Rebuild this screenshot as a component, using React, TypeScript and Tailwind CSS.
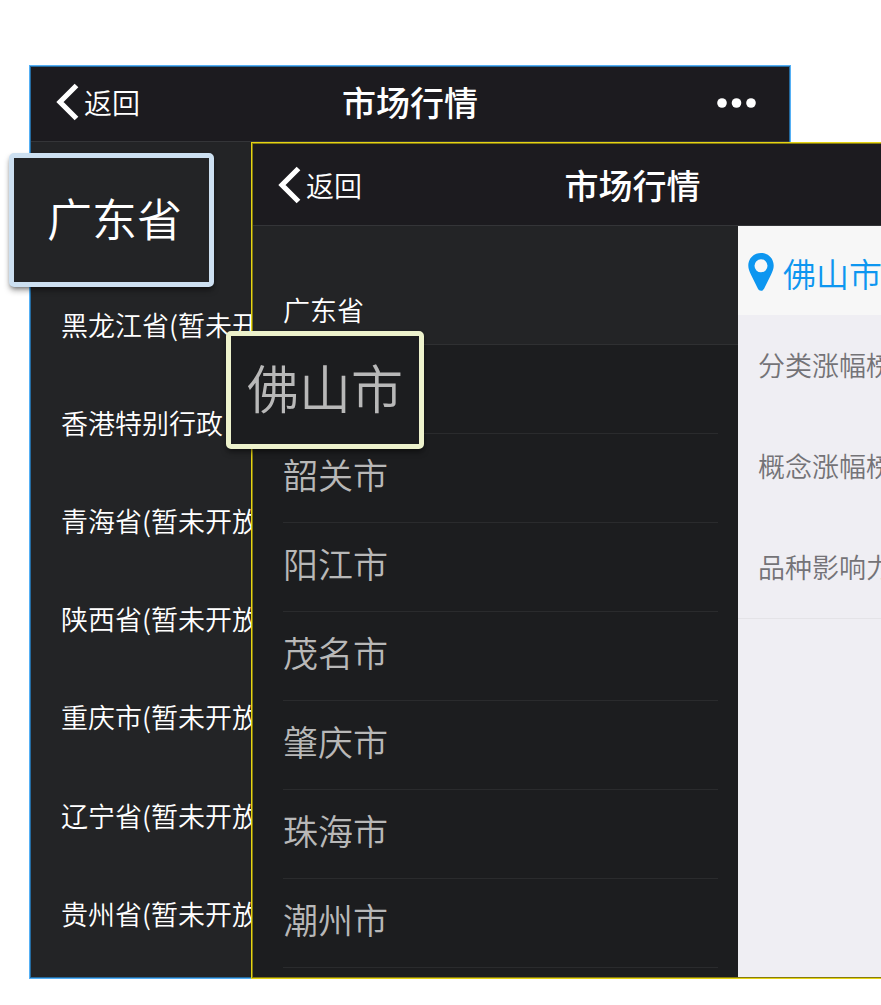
import React from "react";

const provinces = [
  "黑龙江省(暂未开放)",
  "香港特别行政",
  "青海省(暂未开放)",
  "陕西省(暂未开放)",
  "重庆市(暂未开放)",
  "辽宁省(暂未开放)",
  "贵州省(暂未开放)",
];

const cities = ["韶关市", "阳江市", "茂名市", "肇庆市", "珠海市", "潮州市"];

const rankings = ["分类涨幅榜", "概念涨幅榜", "品种影响力"];

function NavBar({ className = "" }: { className?: string }) {
  return (
    <header
      className={`grid grid-cols-3 items-center border-b border-[#343538] bg-[#1c1b1f] px-6 text-white ${className}`}
    >
      <button type="button" className="flex items-center gap-[3px] text-[28px] leading-[40px]">
        <svg viewBox="0 0 26 40" className="h-10 w-[26px]" fill="none" aria-hidden="true">
          <path d="M21.5 3.5 5 20 21.5 36.5" stroke="currentColor" strokeWidth="5.2" />
        </svg>
        返回
      </button>
      <h1 className="text-center text-[34px] leading-[40px] font-medium">市场行情</h1>
      <button type="button" aria-label="更多" className="mt-[2px] mr-[7px] justify-self-end">
        <svg viewBox="0 0 42 12" className="h-3 w-[42px]" fill="currentColor" aria-hidden="true">
          <circle cx="6" cy="6" r="4.8" />
          <circle cx="20.5" cy="6" r="4.8" />
          <circle cx="35" cy="6" r="4.8" />
        </svg>
      </button>
    </header>
  );
}

function ProvinceScreen() {
  return (
    <section className="ml-[30px] w-[760px] border border-[#256a9e] bg-[#232426] outline outline-[#55b0f5]">
      <NavBar className="h-[75px] pb-1" />
      <ul className="grid h-[835px] auto-rows-fr pt-[134px] pb-[14px] text-[27px] text-white">
        {provinces.map((name) => (
          <li key={name} className="flex items-center pl-[30px] whitespace-nowrap">
            {name}
          </li>
        ))}
      </ul>
    </section>
  );
}

function CityScreen() {
  return (
    <section className="absolute top-[143px] left-[252px] flex h-[835px] w-[761px] flex-col overflow-hidden border border-[#857a10] bg-[#1c1d1f] outline outline-[#e5d414]">
      <NavBar className="h-[82px] shrink-0" />
      <div className="flex min-h-0 flex-1">
        <div className="w-[485px] overflow-hidden">
          <h2 className="flex h-[119px] items-end border-b border-[#2f3032] bg-[#232426] pb-[13px] pl-[30px] text-[27px] leading-[42px] text-white">
            广东省
          </h2>
          <ul className="mt-[88px] mr-5 ml-[30px] border-t border-[#2a2b2d] text-[35px] text-[#b8b8b8]">
            {cities.map((name) => (
              <li key={name} className="flex h-[89px] items-center border-b border-[#2a2b2d] pb-2">
                {name}
              </li>
            ))}
          </ul>
        </div>
        <div className="flex-1 bg-[#efeef3]">
          <h2 className="flex h-[89px] items-center gap-[9px] bg-[#f7f7f7] pt-[3px] pl-[10px] text-[33px] text-[#0d96f0]">
            <svg viewBox="0 0 26 38" className="h-[38px] w-[26px]" fill="currentColor" aria-hidden="true">
              <path
                fillRule="evenodd"
                d="M13 0C5.500 0 .3 5.600.3 12.800.3 16 1.600 18.900 3 21.800L9.800 35.600C11.300 38.600 14.700 38.600 16.200 35.600L23 21.800C24.400 18.900 25.700 16 25.700 12.800 25.700 5.600 20.500 0 13 0ZM13 6.300A6.500 6.500 0 1 1 13 19.300 6.500 6.500 0 0 1 13 6.300Z"
              />
            </svg>
            <span className="pt-1">佛山市</span>
          </h2>
          <ul className="border-b border-[#e4e3e7] text-[27px] text-[#747377]">
            {rankings.map((name) => (
              <li key={name} className="flex h-[101px] items-center pl-5 whitespace-nowrap">
                {name}
              </li>
            ))}
          </ul>
        </div>
      </div>
    </section>
  );
}

export default function App() {
  return (
    <main className="relative min-h-[1005px] overflow-hidden bg-white pt-[66px] font-['Noto_Sans_CJK_SC',sans-serif] font-[350]">
      <ProvinceScreen />
      <CityScreen />
      <div className="absolute top-[153px] left-[9px] flex h-[134px] w-[205px] items-center rounded-[5px] border-5 border-[#cde0f1] bg-[#232426] pb-1 pl-[33px] text-[45px] text-white shadow-md shadow-black/40">
        广东省
      </div>
      <div className="absolute top-[331px] left-[226px] flex h-[118px] w-[198px] items-center rounded-[5px] border-5 border-[#edf2cc] bg-[#1c1d1f] pb-[6px] pl-4 text-[52px] text-[#b8b8b8] shadow-md shadow-black/40">
        佛山市
      </div>
    </main>
  );
}
